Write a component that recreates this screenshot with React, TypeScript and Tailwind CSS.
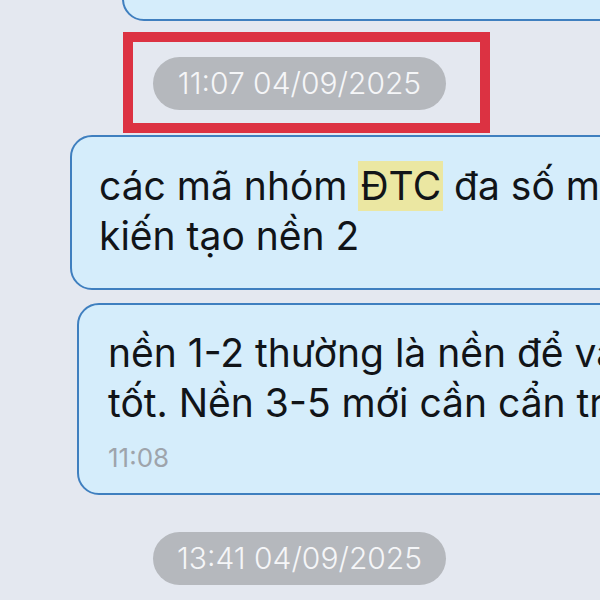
import React from "react";

function DatePill({ text }: { text: string }) {
  return (
    <div className="inline-flex h-[53px] w-[293px] items-center justify-center rounded-full bg-[#b5b8bd] text-[30px] font-light text-[#f5f6f8]">
      {text}
    </div>
  );
}

export default function App() {
  return (
    <div
      className="relative h-[600px] w-[600px] overflow-hidden bg-[#e4e8f0]"
      style={{ fontFamily: "Inter, 'Liberation Sans', sans-serif" }}
    >
      {/* previous bubble, cut at the top */}
      <div className="ml-[122px] mt-[-40px] h-[61px] w-[560px] rounded-[22px] border-2 border-[#3f7fbf] bg-[#d5edfb]" />

      {/* highlighted date marker */}
      <div className="ml-[123px] mt-[11px] h-[101px] w-[367px] border-[10px] border-[#dc3242] pl-[20px] pt-[15px]">
        <DatePill text="11:07 04/09/2025" />
      </div>

      {/* message 1 */}
      <div className="ml-[70px] mt-[2px] h-[155px] w-[600px] rounded-[22px] border-2 border-[#3f7fbf] bg-[#d5edfb] pl-[27px] pt-[24px] text-[39px] leading-[50px] whitespace-nowrap text-[#111418]">
        <div>
          các mã nhóm <span className="inline-block bg-[#ebe7a2] px-[2px]">ĐTC</span> đa số mới ở
        </div>
        <div>kiến tạo nền 2</div>
      </div>

      {/* message 2 */}
      <div className="ml-[77px] mt-[13px] h-[192px] w-[600px] rounded-[22px] border-2 border-[#3f7fbf] bg-[#d5edfb] pl-[29px] pt-[23px] whitespace-nowrap text-[#111418]">
        <div className="text-[39px] leading-[50px]">nền 1-2 thường là nền để vào hàng</div>
        <div className="text-[39px] leading-[50px]">tốt. Nền 3-5 mới cần cẩn trọng</div>
        <div className="mt-[16px] text-[26px] leading-[28px] text-[#9ea4ab]">11:08</div>
      </div>

      {/* next date marker */}
      <div className="ml-[153px] mt-[37px]">
        <DatePill text="13:41 04/09/2025" />
      </div>
    </div>
  );
}
